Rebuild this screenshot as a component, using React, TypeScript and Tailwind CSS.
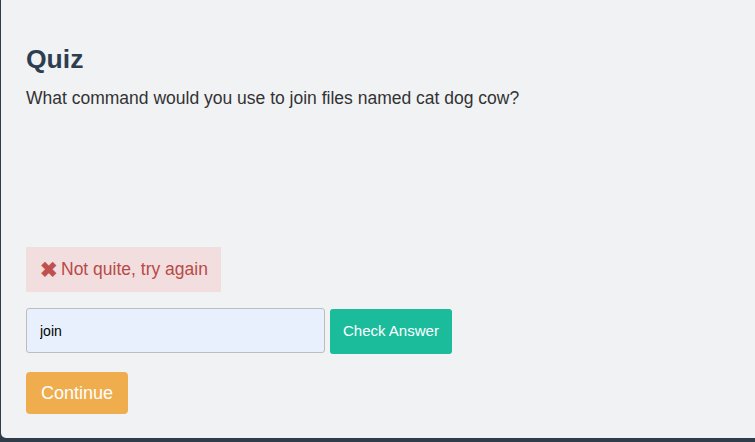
export default function App() {
  return (
    <div className="h-screen w-full overflow-hidden bg-[#2f3d4a] pl-px pb-[4px] font-['Liberation_Sans',Arial,sans-serif]">
      <div className="flex h-full flex-col rounded-bl-[5px] bg-[#f1f2f4] px-[25px] pt-[44px]">
        <h1 className="text-[26.5px] font-bold leading-[30px] text-[#2c3e50]">Quiz</h1>
        <p className="mt-[11px] text-[17.5px] leading-[27px] text-[#333]">
          What command would you use to join files named cat dog cow?
        </p>

        <div className="mt-[135px] flex h-[45px] w-fit items-center gap-[3px] whitespace-nowrap bg-[#f2dede] pl-[14px] pr-[13px] text-[17.5px] text-[#b94a48]">
          <span className="text-[21px] font-bold leading-none text-[#c0504d]">✖</span>
          <span>Not quite, try again</span>
        </div>

        <div className="mt-[16px] flex items-start gap-[5px]">
          <input
            defaultValue="join"
            className="h-[45px] w-[299px] rounded-[3px] border border-[#bdbdbd] bg-[#e8f0fe] px-[13px] text-[14px] text-black outline-none"
          />
          <button className="mt-px h-[45px] rounded-[3px] bg-[#1abc9c] px-[13px] text-[15px] text-white">
            Check Answer
          </button>
        </div>

        <div className="mt-[18px]">
          <button className="h-[42px] rounded-[4px] bg-[#f0ad4e] px-[15px] text-[18px] text-white">
            Continue
          </button>
        </div>
      </div>
    </div>
  )
}
